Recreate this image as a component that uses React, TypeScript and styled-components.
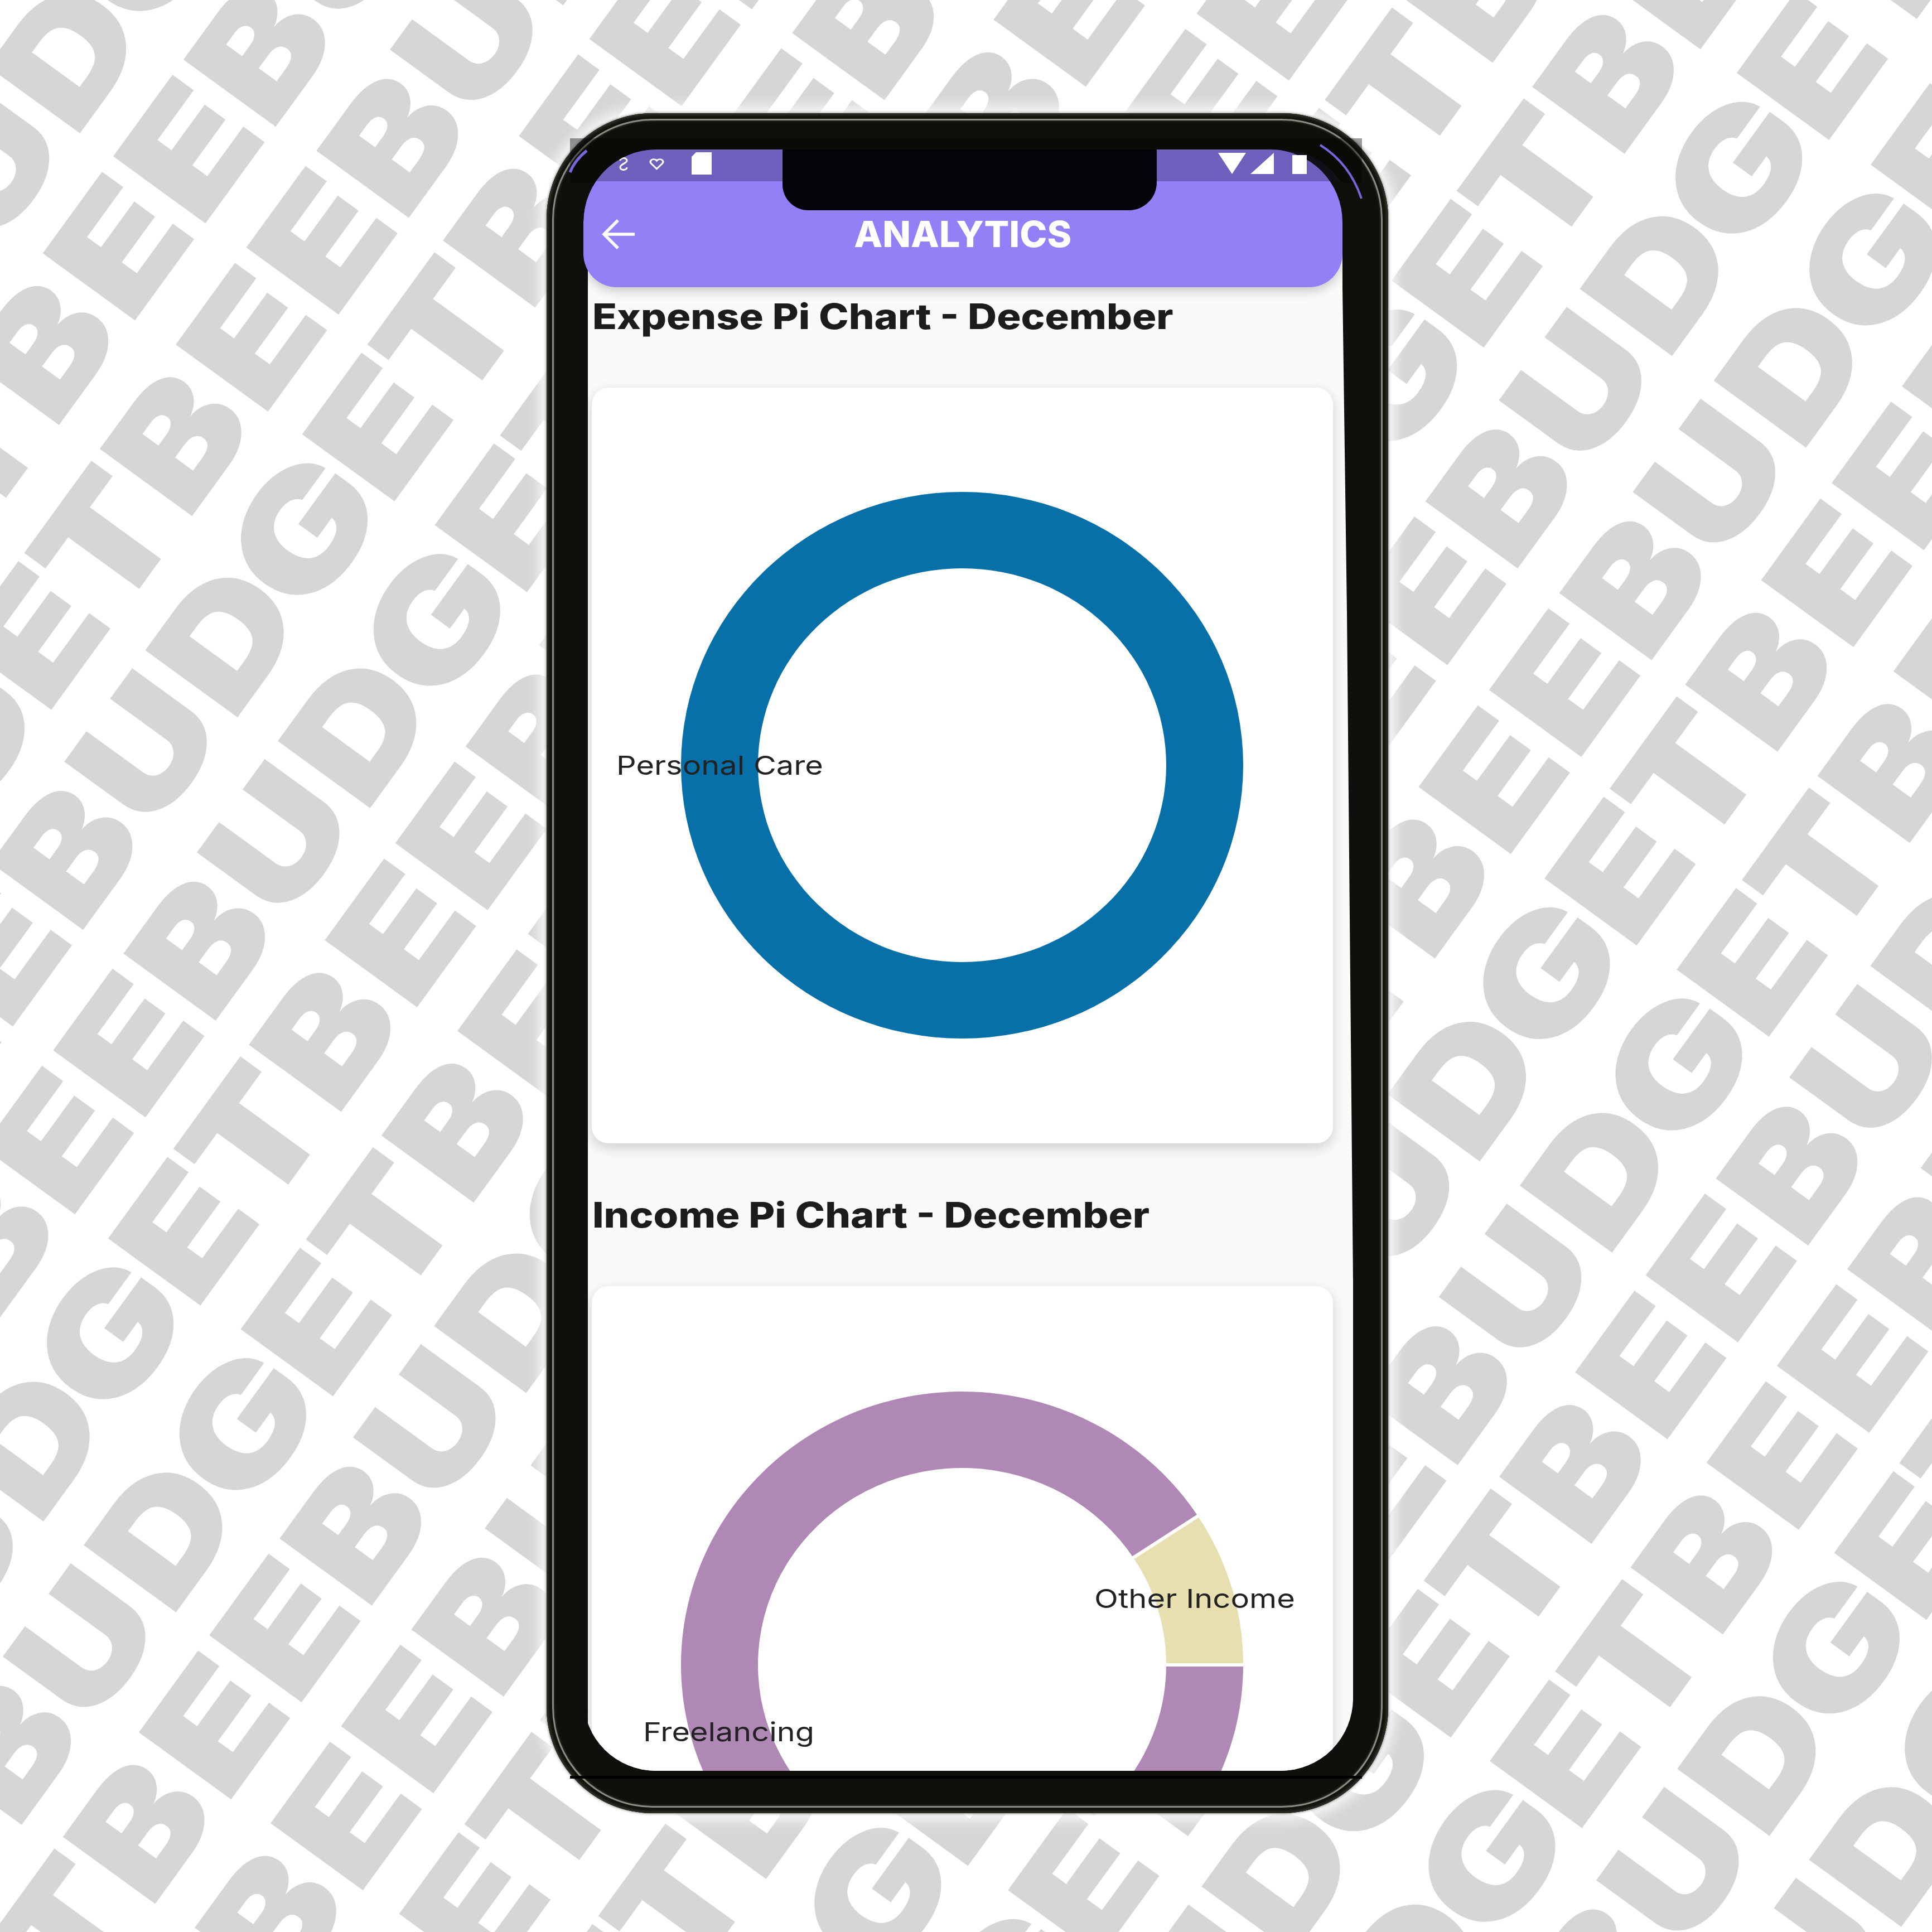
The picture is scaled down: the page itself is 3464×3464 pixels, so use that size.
import React from "react";
import styled, { createGlobalStyle } from "styled-components";

const Global = createGlobalStyle`
  html, body { margin: 0; padding: 0; background: #fff; }
  #root { width: 3464px; height: 3464px; }
`;

const Page = styled.div`
  position: relative;
  width: 3464px;
  height: 3464px;
  overflow: hidden;
  background: #fff;
  padding: 203px 0 0 980px;
  box-sizing: border-box;
`;

const Wallpaper = styled.div`
  position: absolute;
  inset: 0;
  overflow: hidden;
`;

const Rotor = styled.div`
  width: 8400px;
  transform-origin: 0 0;
  transform: rotate(-54deg) translate(-4095.5px, 15px);
`;

const Row = styled.div<{ $h: number; $phase: number }>`
  display: flex;
  height: ${(p) => p.$h}px;
  padding-left: ${(p) => p.$phase}px;
  font-family: Inter, "Liberation Sans", sans-serif;
  font-weight: 900;
  font-size: 277px;
  line-height: 280px;
  color: #d6d6d6;
  -webkit-text-stroke: 3px #d6d6d6;
`;

const Glyph = styled.span<{ $w: number; $dx: number; $sx: number }>`
  flex: none;
  display: block;
  height: 280px;
  width: ${(p) => p.$w}px;
  text-indent: ${(p) => p.$dx}px;
  white-space: pre;
  transform-origin: 0 0;
  transform: scaleX(${(p) => p.$sx});
`;

const LETTERS = [
  { c: "B", w: 224, dx: 0, sx: 1.16 },
  { c: "U", w: 247, dx: 0, sx: 1.17 },
  { c: "D", w: 248, dx: 0, sx: 1.16 },
  { c: "G", w: 230, dx: -18, sx: 1.22 },
  { c: "E", w: 215, dx: 0, sx: 1.22 },
  { c: "T", w: 215, dx: -8, sx: 1.15 },
  { c: "B", w: 231, dx: 0, sx: 1.16 },
  { c: "E", w: 215, dx: 0, sx: 1.22 },
  { c: "E", w: 215, dx: 0, sx: 1.22 },
];

const ROWS = [
  { v: 256, phase: 1462 },
  { v: 533, phase: 109 },
  { v: 822, phase: 117 },
  { v: 1100, phase: 781 },
  { v: 1388, phase: 789 },
  { v: 1666, phase: 1450 },
  { v: 1954, phase: 1458 },
  { v: 2231, phase: 105 },
  { v: 2518, phase: 112 },
  { v: 2800, phase: 777 },
  { v: 3091, phase: 785 },
  { v: 3370, phase: 1446 },
  { v: 3658, phase: 1453 },
  { v: 3935, phase: 101 },
  { v: 4221, phase: 108 },
  { v: 4501, phase: 773 },
  { v: 4788, phase: 780 },
];

const Frame = styled.div`
  position: relative;
  box-sizing: border-box;
  width: 1509px;
  height: 3048px;
  padding: 65px 63px 76px 66px;
  border-radius: 190px;
  background: #0f0f0b;
  display: flex;
  box-shadow: 0 0 5px rgba(30, 30, 25, 0.7),
    0 0 24px 11px rgba(255, 255, 255, 0.92),
    inset 0 0 4px 3px #34342e,
    inset 0 0 0 10px #14140f,
    inset 0 0 1px 13px #8f8f85,
    inset 0 0 0 16px #1a1a15;
`;

const ShotCorners = styled.div`
  position: absolute;
  left: 42px;
  top: 45px;
  width: 1420px;
  height: 80px;
  background: #9c9c9c;
  mix-blend-mode: multiply;
`;

const CornerGlints = styled.svg`
  position: absolute;
  left: 0;
  top: 0;
  width: 1509px;
  height: 300px;
  fill: none;
  stroke: #7466dc;
`;

const BottomRule = styled.div`
  position: absolute;
  left: 42px;
  top: 2981px;
  width: 1420px;
  height: 5px;
  background: #000;
  z-index: 3;
`;

const Screen = styled.div`
  position: relative;
  flex: 1;
  display: flex;
  flex-direction: column;
  overflow: hidden;
  background: #0f0f0b;
  border-radius: 130px;
`;

const AppBar = styled.header`
  position: relative;
  z-index: 1;
  flex: none;
  height: 247px;
  margin-right: 19px;
  background: #9281f6;
  border-radius: 130px 130px 60px 60px;
  box-shadow: 0 8px 18px rgba(0, 0, 0, 0.18);
  display: flex;
  flex-direction: column;
`;

const StatusBar = styled.div`
  height: 57px;
  flex: none;
  background: rgba(30, 20, 60, 0.3);
  border-radius: 130px 130px 0 0;
  display: flex;
  justify-content: space-between;
  align-items: flex-start;
  padding: 0 64px 0 62px;
`;

const StatusGroup = styled.div<{ $gap: number }>`
  display: flex;
  gap: ${(p) => p.$gap}px;
  align-items: center;
  height: 50px;
`;

const SdCard = styled.svg`
  margin-left: 13px;
`;

const Notch = styled.div`
  position: absolute;
  left: 357px;
  top: -10px;
  width: 671px;
  height: 119px;
  background: #050308;
  border-radius: 0 0 50px 46px;
`;

const Toolbar = styled.div`
  flex: 1;
  display: grid;
  grid-template-columns: 1fr auto 1fr;
  align-items: center;
`;

const BackIcon = styled.svg`
  width: 62px;
  height: 56px;
  margin-left: 32px;
  color: #fff;
  display: block;
`;

const Title = styled.h1`
  margin: 0;
  font-family: Inter, "Liberation Sans", sans-serif;
  font-weight: 800;
  font-size: 65px;
  line-height: 80px;
  color: #fff;
  transform: scaleX(1.02);
`;

const Content = styled.main`
  flex: none;
  margin-top: -60px;
  padding: 72px 36px 0 18px;
  background: #fafafa;
  clip-path: polygon(
    8px 0,
    1361px 0,
    1361px 60px,
    1369px 643px,
    1380px 1843px,
    1380px 100%,
    8px 100%
  );
`;

const Heading = styled.h2`
  margin: 0 0 88px;
  font-family: Inter, "Liberation Sans", sans-serif;
  font-weight: 800;
  font-size: 63px;
  line-height: 80px;
  color: #1c1c1c;
  white-space: nowrap;
  transform-origin: 0 50%;
  transform: translateX(-2px) scaleX(1.146);
`;

const Card = styled.section`
  height: 1355px;
  margin: 0 0 88px -3px;
  padding-left: 3px;
  background: #fff;
  border-radius: 30px;
  box-shadow: 0 8px 24px rgba(0, 0, 0, 0.18);
`;

const Chart = styled.svg`
  display: block;
  width: 1326px;
  height: 1355px;
`;

const Label = styled.text`
  font-family: Inter, "Liberation Sans", sans-serif;
  font-size: 47px;
  font-weight: 400;
  fill: #222;
  dominant-baseline: middle;
`;

const RX = 504;
const RY = 490;
const IX = 366;
const IY = 353;

function pt(cx: number, cy: number, rx: number, ry: number, deg: number) {
  const a = (deg * Math.PI) / 180;
  return `${(cx + rx * Math.cos(a)).toFixed(2)} ${(cy + ry * Math.sin(a)).toFixed(2)}`;
}

function wedge(cx: number, cy: number, from: number, to: number) {
  const large = to - from > 180 ? 1 : 0;
  return [
    `M${pt(cx, cy, RX, RY, from)}`,
    `A${RX} ${RY} 0 ${large} 1 ${pt(cx, cy, RX, RY, to)}`,
    `L${pt(cx, cy, IX, IY, to)}`,
    `A${IX} ${IY} 0 ${large} 0 ${pt(cx, cy, IX, IY, from)}`,
    "Z",
  ].join(" ");
}

function ringPath(cx: number, cy: number) {
  const e = (rx: number, ry: number) =>
    `M${cx - rx} ${cy} A${rx} ${ry} 0 1 0 ${cx + rx} ${cy} A${rx} ${ry} 0 1 0 ${cx - rx} ${cy} Z`;
  return `${e(RX, RY)} ${e(IX, IY)}`;
}

const CX = 661;
const CY2 = 679;

export default function App() {
  return (
    <Page>
      <Global />
      <Wallpaper>
        <Rotor>
          {ROWS.map((r, i) => (
            <Row key={r.v} $h={i < ROWS.length - 1 ? ROWS[i + 1].v - r.v : 280} $phase={r.phase}>
              {[0, 1, 2, 3].flatMap((n) =>
                LETTERS.map((l, j) => (
                  <Glyph key={`${n}-${j}`} $w={l.w} $dx={l.dx} $sx={l.sx}>
                    {l.c}
                  </Glyph>
                ))
              )}
            </Row>
          ))}
        </Rotor>
      </Wallpaper>
      <Frame>
        <ShotCorners />
        <CornerGlints viewBox="0 0 1509 300">
          <path d="M1387 57Q1440 90 1461 153" strokeWidth="4" />
          <path d="M42 106Q50 85 72 67" strokeWidth="5" />
        </CornerGlints>
        <Screen>
          <AppBar>
            <StatusBar>
              <StatusGroup $gap={36}>
                <svg width="20" height="38" viewBox="0 0 20 38">
                  <path d="M4 14c0-6 12-6 12 0 0 5-12 6-12 12 0 6 12 6 12 0" fill="none" stroke="#fff" strokeWidth="3" />
                </svg>
                <svg width="27" height="26" viewBox="0 0 24 32" preserveAspectRatio="none">
                  <path d="M12 28 3 16c-3-5 1-10 5-9 2 0 3 1 4 3 1-2 2-3 4-3 4-1 8 4 5 9z" fill="none" stroke="#fff" strokeWidth="3" />
                </svg>
                <SdCard width="36" height="40" viewBox="0 0 36 40">
                  <path d="M8 0h28v40H0V8z" fill="#fff" />
                </SdCard>
              </StatusGroup>
              <StatusGroup $gap={8}>
                <svg width="50" height="38" viewBox="0 0 50 38">
                  <path d="M0 0h50L25 38z" fill="#fff" />
                </svg>
                <svg width="42" height="38" viewBox="0 0 42 38">
                  <path d="M42 0v38H0z" fill="#fff" />
                </svg>
                <svg width="51" height="38" viewBox="0 0 51 38">
                  <rect x="25" y="4" width="26" height="34" fill="#fff" />
                </svg>
              </StatusGroup>
            </StatusBar>
            <Toolbar>
              <BackIcon viewBox="0 0 62 56" fill="none" stroke="currentColor" strokeWidth="5.5">
                <path d="M60 28H6M30 3 5 28l25 25" />
              </BackIcon>
              <Title>ANALYTICS</Title>
              <span />
            </Toolbar>
            <Notch />
          </AppBar>
          <Content>
            <Heading>Expense Pi Chart - December</Heading>
            <Card>
              <Chart viewBox="0 0 1326 1355">
                <path d={ringPath(CX, 677)} fill="#0770a8" fillRule="evenodd" />
                <Label x={41} y={681} textLength={371} lengthAdjust="spacingAndGlyphs">
                  Personal Care
                </Label>
              </Chart>
            </Card>
            <Heading>Income Pi Chart - December</Heading>
            <Card>
              <Chart viewBox="0 0 1326 1355">
                <path d={wedge(CX, CY2, 0, 327)} fill="#b088b6" />
                <path d={wedge(CX, CY2, 327, 360)} fill="#e8dfb1" />
                <path d={`M${pt(CX, CY2, IX - 4, IY - 4, 0)} L${pt(CX, CY2, RX + 4, RY + 4, 0)}`} stroke="#fff" strokeWidth="6" />
                <path d={`M${pt(CX, CY2, IX - 4, IY - 4, 327)} L${pt(CX, CY2, RX + 4, RY + 4, 327)}`} stroke="#fff" strokeWidth="6" />
                <Label x={898} y={564} textLength={360} lengthAdjust="spacingAndGlyphs">
                  Other Income
                </Label>
                <Label x={89} y={803} textLength={307} lengthAdjust="spacingAndGlyphs">
                  Freelancing
                </Label>
              </Chart>
            </Card>
          </Content>
        </Screen>
        <BottomRule />
      </Frame>
    </Page>
  );
}
